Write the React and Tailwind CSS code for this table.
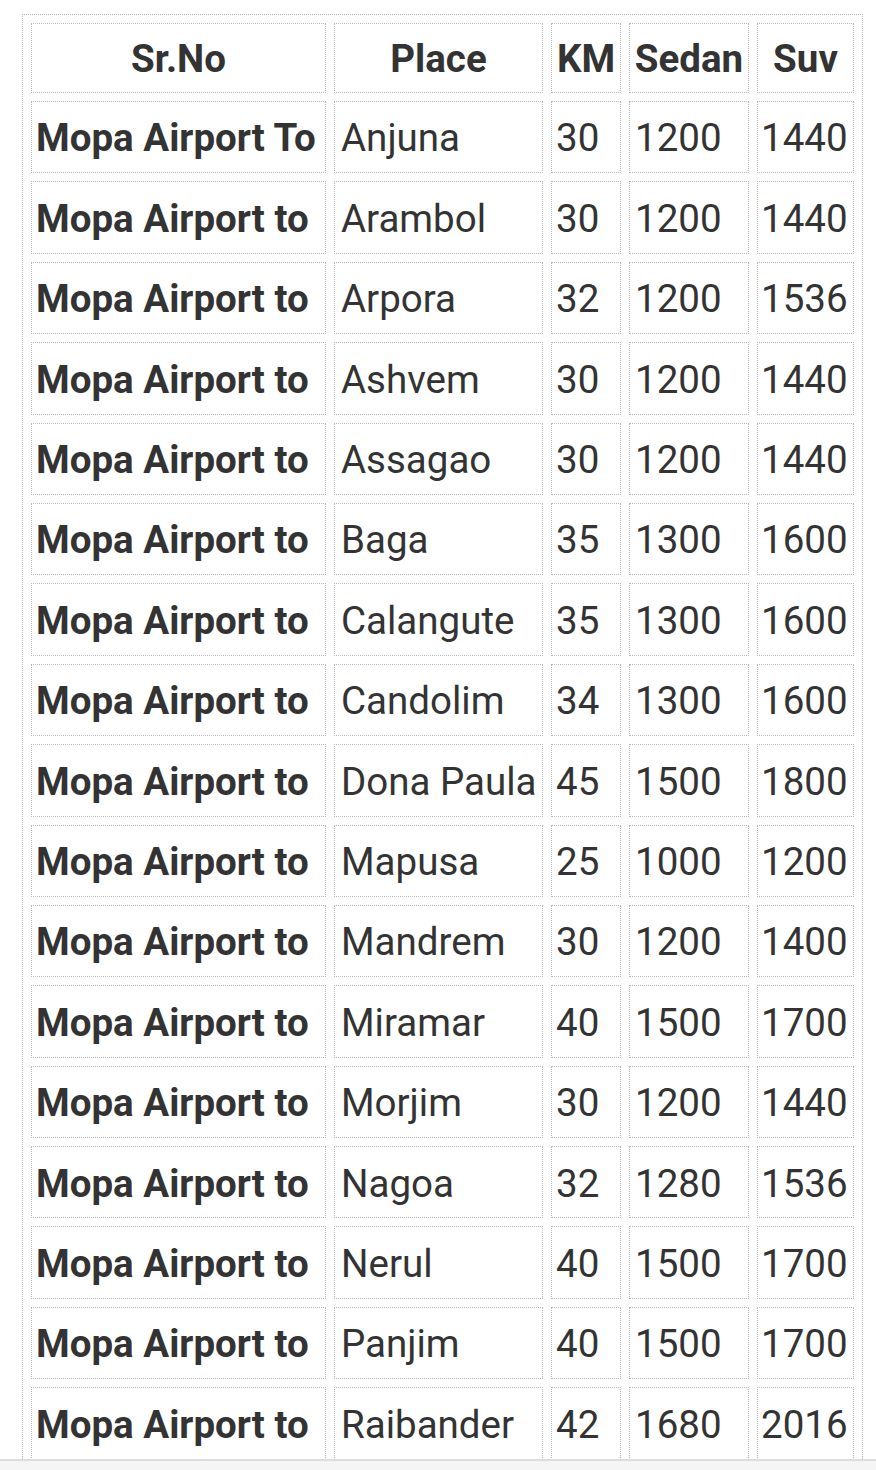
const rows = [
  ['Mopa Airport To', 'Anjuna', '30', '1200', '1440'],
  ['Mopa Airport to', 'Arambol', '30', '1200', '1440'],
  ['Mopa Airport to', 'Arpora', '32', '1200', '1536'],
  ['Mopa Airport to', 'Ashvem', '30', '1200', '1440'],
  ['Mopa Airport to', 'Assagao', '30', '1200', '1440'],
  ['Mopa Airport to', 'Baga', '35', '1300', '1600'],
  ['Mopa Airport to', 'Calangute', '35', '1300', '1600'],
  ['Mopa Airport to', 'Candolim', '34', '1300', '1600'],
  ['Mopa Airport to', 'Dona Paula', '45', '1500', '1800'],
  ['Mopa Airport to', 'Mapusa', '25', '1000', '1200'],
  ['Mopa Airport to', 'Mandrem', '30', '1200', '1400'],
  ['Mopa Airport to', 'Miramar', '40', '1500', '1700'],
  ['Mopa Airport to', 'Morjim', '30', '1200', '1440'],
  ['Mopa Airport to', 'Nagoa', '32', '1280', '1536'],
  ['Mopa Airport to', 'Nerul', '40', '1500', '1700'],
  ['Mopa Airport to', 'Panjim', '40', '1500', '1700'],
  ['Mopa Airport to', 'Raibander', '42', '1680', '2016'],
]

const cell = 'border border-dotted border-[#b8b8b8] pt-[3px] pb-0 pr-0 h-[72.4px] align-middle whitespace-nowrap'
const pads = ['pl-[4px] font-bold', 'pl-[6px]', 'pl-[4px]', 'pl-[5px]', 'pl-[3px]']

export default function App() {
  return (
    <div className="h-[1470px] bg-white font-['Roboto',sans-serif] text-[#333] flex flex-col">
      <div className="h-[1459px] overflow-hidden pl-[22px] pt-[14px]">
        <table className="w-[841px] table-fixed border-separate border-spacing-x-[8px] border-spacing-y-[8.5px] border border-dotted border-[#b8b8b8] text-[38.5px] leading-none">
          <colgroup>
            <col className="w-[295px]" />
            <col className="w-[209px]" />
            <col className="w-[70px]" />
            <col className="w-[120px]" />
            <col className="w-[97px]" />
          </colgroup>
          <thead>
            <tr>
              {['Sr.No', 'Place', 'KM', 'Sedan', 'Suv'].map((h) => (
                <th key={h} className={`${cell} !h-[70px] !pl-0 !pt-[2px] text-center font-bold`}>
                  {h}
                </th>
              ))}
            </tr>
          </thead>
          <tbody>
            {rows.map((r) => (
              <tr key={r[1]}>
                {r.map((v, i) => (
                  <td key={i} className={`${cell} ${pads[i]}`}>
                    {v}
                  </td>
                ))}
              </tr>
            ))}
          </tbody>
        </table>
      </div>
      <div className="flex-1 border-t-2 border-[#dcdcdc] bg-[#f5f5f5]" />
    </div>
  )
}
